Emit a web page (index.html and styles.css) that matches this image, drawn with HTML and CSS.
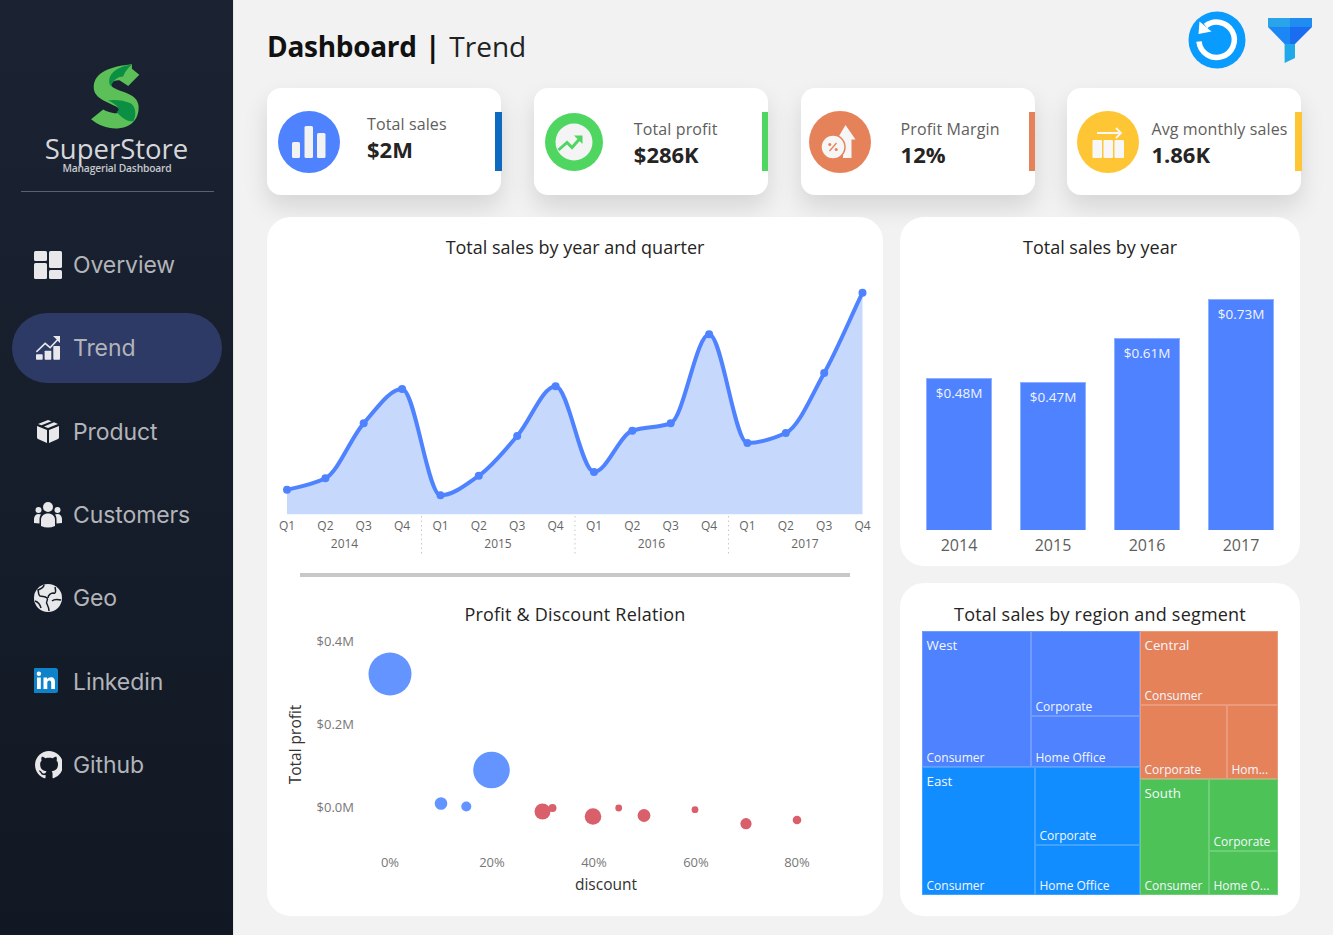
FILE: index.html
```html
<!DOCTYPE html>
<html lang="en">
<head>
<meta charset="utf-8">
<title>SuperStore Dashboard | Trend</title>
<link rel="stylesheet" href="styles.css">
</head>
<body>
<div class="app">
  <aside class="sidebar">
    <div class="brand">
      <svg class="logo" viewBox="270 68 155 200">
        <path fill="#5cbf57" d="M398 72C335 78 285 96 284 140C283 178 335 186 358 203C366 211 358 220 345 218C332 216 322 212 312 207L276 236C300 256 330 266 360 263C398 260 420 232 418 198C416 158 362 156 340 140C330 132 340 118 362 120L387 137L420 103L398 85Z"/>
        <path fill="#0a8f43" d="M398 73C365 76 332 92 330 120C330 130 332 134 336 137C342 118 356 108 372 108C376 96 386 82 398 73Z"/>
        <path fill="#0a8f43" d="M326 180C352 190 368 208 352 214C368 232 386 244 402 242C412 224 410 198 394 188C374 180 348 176 326 180Z"/>
      </svg>
      <div class="brand-name">SuperStore</div>
      <div class="brand-sub">Managerial Dashboard</div>
    </div>
    <nav class="nav">
      <a class="nav-item">
        <svg class="nav-icon" viewBox="0 0 28 28"><g fill="#e8e8ea"><rect x="0" y="0" width="13" height="10" rx="1.5"/><rect x="0" y="12" width="13" height="16" rx="1.5"/><rect x="15" y="0" width="13" height="17" rx="1.5"/><rect x="15" y="19" width="13" height="9" rx="1.5"/></g></svg>
        <span>Overview</span>
      </a>
      <a class="nav-item active">
        <svg class="nav-icon" viewBox="0 0 28 28"><g fill="#e8e8ea"><rect x="2" y="20.300" width="6.700" height="5.500" rx=".8"/><rect x="10.600" y="16.700" width="6.700" height="9.100" rx=".8"/><rect x="19.300" y="12" width="6.700" height="13.800" rx=".8"/><path d="M19 2h7v7l-2.300-2.300-7.500 8-5-4.300-8.300 8-1-1.100 9.200-9 5 4.300 6.600-7.200z"/></g></svg>
        <span>Trend</span>
      </a>
      <a class="nav-item">
        <svg class="nav-icon" viewBox="0 0 28 28"><g fill="#e8e8ea"><path d="M3 8l10 4v13L4 21a2 2 0 0 1-1-2z"/><path d="M25 8l-10 4v13l9-4a2 2 0 0 0 1-2z"/><path d="M14 2l3.500 1.300-10 4L4 6zM20 4.300L24 6l-10 4-4-1.600z"/></g></svg>
        <span>Product</span>
      </a>
      <a class="nav-item">
        <svg class="nav-icon" viewBox="0 0 28 28"><g fill="#e8e8ea"><circle cx="14" cy="6" r="5"/><circle cx="4.500" cy="9" r="3"/><circle cx="23.500" cy="9" r="3"/><path d="M7 25v-6c0-4 3-6.500 7-6.500s7 2.500 7 6.500v6q-7 3-14 0z"/><path d="M0 22v-4c0-3 2-5 4.500-5 1 0 1.700.2 2.500.6-1 1.400-1.500 3-1.500 5v3.900z"/><path d="M28 22v-4c0-3-2-5-4.500-5-1 0-1.700.2-2.500.6 1 1.400 1.500 3 1.500 5v3.900z"/></g></svg>
        <span>Customers</span>
      </a>
      <a class="nav-item">
        <svg class="nav-icon" viewBox="0 0 28 28"><circle cx="14" cy="14" r="14" fill="#e8e8ea"/><path fill="none" stroke="#151c29" stroke-width="1.500" d="M10 .8C10 4 6 5 4 6c1 3 0 5 2 6 3 1 5 0 7 2 2 2-2 4 0 6 1 2 2 4 2 7M14 14c0-3 3-5 5-5 3 1 3-2 2-6M18 17c2-2 5-2 9-1M1 17c3 1 5 3 6 7"/></svg>
        <span>Geo</span>
      </a>
      <a class="nav-item">
        <svg class="nav-icon" viewBox="0 0 28 28"><rect x="-1" y="0" width="25" height="25" rx="2.500" fill="#0f83c9"/><g fill="#fff"><rect x="3" y="9.500" width="3.800" height="11.500"/><circle cx="4.900" cy="5.800" r="2.200"/><path d="M9.500 9.500h3.600v1.700c.8-1.300 2.200-2 3.800-2 3.100 0 4.100 2 4.100 5V21h-3.800v-6c0-1.600-.4-2.600-1.800-2.600-1.600 0-2.100 1.100-2.100 2.700V21H9.500z"/></g></svg>
        <span>Linkedin</span>
      </a>
      <a class="nav-item">
        <svg class="nav-icon" viewBox="-.6 0 16 16"><path fill="#e8e8ea" d="M8 0C3.580 0 0 3.580 0 8c0 3.540 2.290 6.530 5.470 7.590.4.070.55-.17.55-.38 0-.19-.01-.82-.01-1.490-2.010.37-2.530-.49-2.690-.94-.09-.23-.48-.94-.82-1.130-.28-.15-.68-.52-.01-.53.63-.01 1.080.58 1.230.82.72 1.210 1.870.87 2.330.66.070-.52.28-.87.51-1.070-1.780-.2-3.640-.89-3.640-3.950 0-.87.31-1.590.82-2.150-.08-.2-.36-1.020.08-2.120 0 0 .67-.21 2.200.82.64-.18 1.320-.27 2-.27.68 0 1.360.09 2 .27 1.530-1.040 2.200-.82 2.200-.82.44 1.100.16 1.920.08 2.120.51.56.82 1.270.82 2.150 0 3.070-1.870 3.750-3.650 3.950.29.25.54.73.54 1.480 0 1.070-.01 1.930-.01 2.200 0 .21.15.46.55.38A8.013 8.013 0 0 0 16 8c0-4.420-3.580-8-8-8z"/></svg>
        <span>Github</span>
      </a>
    </nav>
  </aside>

  <main class="main">
    <header class="topbar">
      <h1 class="page-title"><b>Dashboard</b> <b class="sep">|</b> <span>Trend</span></h1>
      <div class="top-actions">
        <svg class="refresh" viewBox="0 0 58 58"><circle cx="29" cy="29" r="28.500" fill="#0a9bff"/><path fill="none" stroke="#fff" stroke-width="5.500" d="M17.500 15A17.700 17.700 0 1 1 11 30.500"/><path fill="#fff" d="M11.500 10.500L10.500 23L23.500 20.500z"/></svg>
        <svg class="funnel" viewBox="0 0 44 46"><path fill="#29a3e9" d="M0 0H22V9H0z"/><path fill="#1f8cf2" d="M22 0H44V9H22z"/><path fill="#1a87f5" d="M0 9H22V26H16.600z"/><path fill="#1a6cf0" d="M22 9H44L27 26H22z"/><path fill="#1fa9e8" d="M16.600 26H27V40L16.600 45z"/></svg>
      </div>
    </header>

    <section class="kpis">
      <article class="kpi">
        <svg class="kpi-icon" viewBox="0 0 62 62"><circle cx="31" cy="31" r="31" fill="#4e82ff"/><g fill="#f2f2f2"><rect x="14" y="31" width="8" height="16" rx="1.500"/><rect x="26.500" y="15" width="8.500" height="32" rx="1.500"/><rect x="39" y="22" width="8.500" height="25" rx="1.500"/></g></svg>
        <div class="kpi-text shift-up"><div class="kpi-label">Total sales</div><div class="kpi-value">$2M</div></div>
        <i class="kpi-bar bar-blue"></i>
      </article>
      <article class="kpi kpi-green">
        <svg class="kpi-icon small" viewBox="0 0 58 58"><circle cx="29" cy="29" r="29" fill="#4fd660"/><circle cx="29" cy="29" r="18.500" fill="#f4f4f4"/><path fill="none" stroke="#4fd660" stroke-width="3" d="M13.500 37L22 29.500L27 34.500L35 25.500"/><path fill="#4fd660" d="M29 22.500h8.500V31z"/></svg>
        <div class="kpi-text"><div class="kpi-label">Total profit</div><div class="kpi-value">$286K</div></div>
        <i class="kpi-bar bar-green"></i>
      </article>
      <article class="kpi kpi-orange">
        <svg class="kpi-icon" viewBox="0 0 62 62"><circle cx="31" cy="31" r="31" fill="#e6825a"/><path fill="#f6f6f6" d="M36.500 14L46.500 28.500H42.500V47H34V28.500H28z"/><circle cx="24" cy="36" r="12" fill="#f6f6f6" stroke="#e6825a" stroke-width="1.500"/><path fill="none" stroke="#e6825a" stroke-width="1.300" d="M20.500 40l7-8"/><circle cx="20.800" cy="33.500" r="1.500" fill="#e6825a"/><circle cx="27.200" cy="38.500" r="1.500" fill="#e6825a"/></svg>
        <div class="kpi-text"><div class="kpi-label">Profit Margin</div><div class="kpi-value">12%</div></div>
        <i class="kpi-bar bar-orange"></i>
      </article>
      <article class="kpi kpi-last">
        <svg class="kpi-icon" viewBox="0 0 62 62"><circle cx="31" cy="31" r="31" fill="#fec634"/><g fill="#f7f7f7"><rect x="15.500" y="29" width="9.500" height="18" rx="1"/><rect x="26.500" y="29" width="9.500" height="18" rx="1"/><rect x="37.500" y="29" width="9.500" height="18" rx="1"/></g><path fill="none" stroke="#f7f7f7" stroke-width="1.800" d="M20 22h24M39 17l5 5-5 5"/></svg>
        <div class="kpi-text"><div class="kpi-label">Avg monthly sales</div><div class="kpi-value">1.86K</div></div>
        <i class="kpi-bar bar-yellow"></i>
      </article>
    </section>

    <section class="charts">
      <div class="panel panel-left">
        <h2 class="panel-title">Total sales by year and quarter</h2>
        <svg class="line-chart" viewBox="267 270 616 303">
          <path fill="#c6d9fd" d="M287 489.700C299.800 487 312.600 484.600 325.400 478.300C338.200 472 350.900 437.400 363.700 423.300C376.500 409.200 389.300 389 402.100 389C414.900 389 427.700 495.300 440.500 495.300C453.300 495.300 466 484.400 478.800 475.700C491.600 467 504.400 450.700 517.200 436C530 421.300 542.800 386.300 555.600 386.300C568.400 386.300 581.200 472 594 472C606.800 472 619.500 434.900 632.300 430.700C645.100 426.500 657.900 427.900 670.700 423.300C683.500 418.700 696.300 334.300 709.100 334.300C721.900 334.300 734.600 443 747.400 443C760.200 443 773 438.700 785.800 433C798.600 427.300 811.400 395.900 824.200 373C837 350.100 849.700 319.400 862.500 292.700L862.500 514.300L287 514.300Z"/>
          <path fill="none" stroke="#4e82ff" stroke-width="4" d="M287 489.700C299.800 487 312.600 484.600 325.400 478.300C338.200 472 350.900 437.400 363.700 423.300C376.500 409.200 389.300 389 402.100 389C414.900 389 427.700 495.300 440.500 495.300C453.300 495.300 466 484.400 478.800 475.700C491.600 467 504.400 450.700 517.200 436C530 421.300 542.800 386.300 555.600 386.300C568.400 386.300 581.200 472 594 472C606.800 472 619.500 434.900 632.300 430.700C645.100 426.500 657.900 427.900 670.700 423.300C683.500 418.700 696.300 334.300 709.100 334.300C721.900 334.300 734.600 443 747.400 443C760.200 443 773 438.700 785.800 433C798.600 427.300 811.400 395.900 824.200 373C837 350.100 849.700 319.400 862.500 292.700"/>
          <g fill="#4e82ff">
            <circle cx="287" cy="489.700" r="4"/><circle cx="325.400" cy="478.300" r="4"/><circle cx="363.700" cy="423.300" r="4"/><circle cx="402.100" cy="389" r="4"/><circle cx="440.500" cy="495.300" r="4"/><circle cx="478.800" cy="475.700" r="4"/><circle cx="517.200" cy="436" r="4"/><circle cx="555.600" cy="386.300" r="4"/><circle cx="594" cy="472" r="4"/><circle cx="632.300" cy="430.700" r="4"/><circle cx="670.700" cy="423.300" r="4"/><circle cx="709.100" cy="334.300" r="4"/><circle cx="747.400" cy="443" r="4"/><circle cx="785.800" cy="433" r="4"/><circle cx="824.200" cy="373" r="4"/><circle cx="862.500" cy="292.700" r="4"/>
          </g>
          <g class="axis-sep"><path d="M421.500 516V555M575 516V555M728.500 516V555"/></g>
          <g class="axis-text" text-anchor="middle">
            <text x="287" y="530">Q1</text><text x="325.400" y="530">Q2</text><text x="363.700" y="530">Q3</text><text x="402.100" y="530">Q4</text><text x="440.500" y="530">Q1</text><text x="478.800" y="530">Q2</text><text x="517.200" y="530">Q3</text><text x="555.600" y="530">Q4</text><text x="594" y="530">Q1</text><text x="632.300" y="530">Q2</text><text x="670.700" y="530">Q3</text><text x="709.100" y="530">Q4</text><text x="747.400" y="530">Q1</text><text x="785.800" y="530">Q2</text><text x="824.200" y="530">Q3</text><text x="862.500" y="530">Q4</text>
            <text x="344.500" y="548">2014</text><text x="498" y="548">2015</text><text x="651.500" y="548">2016</text><text x="805" y="548">2017</text>
          </g>
        </svg>
        <div class="divider"></div>
        <h2 class="panel-title title-wide">Profit &amp; Discount Relation</h2>
        <svg class="scatter-chart" viewBox="267 626 616 290">
          <g class="axis-text scatter-axis">
            <g text-anchor="end"><text x="354" y="646">$0.4M</text><text x="354" y="729">$0.2M</text><text x="354" y="812">$0.0M</text></g>
            <g text-anchor="middle"><text x="390" y="867">0%</text><text x="492" y="867">20%</text><text x="594" y="867">40%</text><text x="696" y="867">60%</text><text x="797" y="867">80%</text></g>
          </g>
          <text class="axis-title" x="606" y="890" text-anchor="middle">discount</text>
          <text class="axis-title" text-anchor="middle" transform="translate(301 744.500) rotate(-90)">Total profit</text>
          <g fill="#6394ff"><circle cx="390" cy="674" r="21.500"/><circle cx="491.500" cy="770" r="18.300"/><circle cx="441" cy="803.500" r="6.300"/><circle cx="466.300" cy="806.500" r="5"/></g>
          <g fill="#d9606b"><circle cx="542.500" cy="811.500" r="8"/><circle cx="552.500" cy="808" r="4"/><circle cx="593" cy="816.500" r="8.300"/><circle cx="618.700" cy="808" r="3.400"/><circle cx="644" cy="815.500" r="6.400"/><circle cx="695" cy="809.700" r="3.400"/><circle cx="746" cy="823.700" r="5.600"/><circle cx="797" cy="820" r="4.300"/></g>
        </svg>
      </div>

      <div class="panel-column">
        <div class="panel panel-bars">
          <h2 class="panel-title">Total sales by year</h2>
          <div class="bars">
            <div class="bar-col"><div class="bar" style="height:152px">$0.48M</div><div class="bar-year">2014</div></div>
            <div class="bar-col"><div class="bar" style="height:148px">$0.47M</div><div class="bar-year">2015</div></div>
            <div class="bar-col"><div class="bar" style="height:192px">$0.61M</div><div class="bar-year">2016</div></div>
            <div class="bar-col"><div class="bar" style="height:231px">$0.73M</div><div class="bar-year">2017</div></div>
          </div>
        </div>
        <div class="panel panel-tree">
          <h2 class="panel-title title-wide">Total sales by region and segment</h2>
          <div class="treemap">
            <div class="tm-col tm-left">
              <div class="tm-region west">
                <div class="tm-cell w-consumer"><span class="tm-name">West</span><span>Consumer</span></div>
                <div class="tm-stack w-side">
                  <div class="tm-cell w-corp"><span>Corporate</span></div>
                  <div class="tm-cell w-home"><span>Home Office</span></div>
                </div>
              </div>
              <div class="tm-region east">
                <div class="tm-cell e-consumer"><span class="tm-name">East</span><span>Consumer</span></div>
                <div class="tm-stack e-side">
                  <div class="tm-cell e-corp"><span>Corporate</span></div>
                  <div class="tm-cell e-home"><span>Home Office</span></div>
                </div>
              </div>
            </div>
            <div class="tm-col tm-right">
              <div class="tm-stack central">
                <div class="tm-cell c-consumer"><span class="tm-name">Central</span><span>Consumer</span></div>
                <div class="tm-region c-row">
                  <div class="tm-cell c-corp"><span>Corporate</span></div>
                  <div class="tm-cell c-home"><span>Hom...</span></div>
                </div>
              </div>
              <div class="tm-region south">
                <div class="tm-cell s-consumer"><span class="tm-name">South</span><span>Consumer</span></div>
                <div class="tm-stack s-side">
                  <div class="tm-cell s-corp"><span>Corporate</span></div>
                  <div class="tm-cell s-home"><span>Home O...</span></div>
                </div>
              </div>
            </div>
          </div>
        </div>
      </div>
    </section>
  </main>
</div>
</body>
</html>
```
FILE: styles.css
```css
* { box-sizing: border-box; }
html, body { margin: 0; height: 100%; }
body { font-family: "Open Sans", "Noto Sans", sans-serif; background: #f2f2f2; color: #252423; overflow: hidden; }
.app { display: flex; width: 1333px; height: 935px; }

.sidebar { width: 234px; flex: none; background: linear-gradient(180deg, #1b2333 0%, #111823 100%); border-right: 1px solid #e6e6e6; display: flex; flex-direction: column; }
.brand { display: flex; flex-direction: column; align-items: center; padding-top: 63px; height: 192px; margin: 0 19px 0 21px; border-bottom: 1px solid #5a606c; }
.logo { width: 52px; height: 67px; display: block; margin-left: -5px; flex: none; }
.brand-name { font-size: 27.500px; line-height: 28px; color: #d6d7da; margin: 5px 0 0 -2px; }
.brand-sub { font-size: 10.300px; line-height: 10px; font-weight: 600; color: #c6c8cc; margin: 0 0 0 -1px; letter-spacing: -.2px; }

.nav { display: flex; flex-direction: column; gap: 13.330px; padding: 38px 12px 0; }
.nav-item { height: 70px; display: flex; align-items: center; gap: 11px; padding-left: 22px; width: 210px; border-radius: 35px; font-family: Inter, sans-serif; font-size: 23px; letter-spacing: -.1px; color: #b2b4b9; }
.nav-item.active { background: #2e3a66; }
.nav-icon { width: 28px; height: 28px; flex: none; }

.main { flex: 1; min-width: 0; padding: 0 33px 19px 33px; display: flex; flex-direction: column; }
.topbar { height: 88px; flex: none; display: flex; justify-content: space-between; }
.page-title { margin: 29px 0 0; font-size: 28px; line-height: 34px; font-weight: 400; color: #111; white-space: nowrap; }
.page-title b { font-weight: 700; letter-spacing: -.3px; }
.page-title .sep { margin: 0 2px 0 1px; }
.page-title span { color: #222; }
.top-actions { display: flex; align-items: flex-start; gap: 22px; margin-right: -12px; padding-top: 11px; }
.refresh { width: 58px; height: 58px; }
.funnel { width: 44px; height: 46px; margin-top: 7px; }

.kpis { display: flex; gap: 32.800px; flex: none; }
.kpi { width: 234px; flex: none; height: 107px; background: #fff; border-radius: 14px; box-shadow: 0 12px 24px rgba(0, 0, 0, .12); display: flex; align-items: center; padding-left: 11px; }
.kpi-icon { width: 62px; height: 62px; flex: none; }
.kpi-icon.small { width: 58px; height: 58px; }
.kpi-text { margin-top: 2px; margin-left: 27px; flex: 1; min-width: 0; }
.kpi-green .kpi-text { margin-left: 31px; }
.kpi-orange { padding-left: 8px; }
.kpi-orange .kpi-text { margin-left: 30px; }
.kpi-last { padding-left: 10px; }
.kpi-last .kpi-text { margin-left: 12px; }
.kpi-text.shift-up { margin-top: -8px; }
.kpi-label { font-size: 16px; line-height: 22px; color: #605e5c; white-space: nowrap; letter-spacing: .12px; }
.kpi-value { font-size: 22px; line-height: 28px; font-weight: 700; color: #252423; }
.kpi-bar { width: 6.500px; height: 59px; flex: none; margin-right: -.5px; }
.bar-blue { background: #0d6abf; }
.bar-green { background: #4fd660; }
.bar-orange { background: #e6825a; }
.bar-yellow { background: #fec634; }

.charts { display: flex; gap: 17px; margin-top: 22px; flex: 1; min-height: 0; }
.panel { background: #fff; border-radius: 24px; }
.panel-left { width: 616px; padding-top: 19px; display: flex; flex-direction: column; align-items: center; }
.panel-title { margin: 0; font-size: 18px; line-height: 22px; font-weight: 400; color: #252423; text-align: center; white-space: nowrap; }
.title-wide { letter-spacing: .2px; }
.line-chart { display: block; width: 616px; height: 303px; margin-top: 12px; flex: none; }
.divider { width: 550px; height: 4px; background: #c8c8c8; flex: none; margin-bottom: 26px; }
.scatter-chart { display: block; width: 616px; height: 290px; flex: none; margin-top: 1px; }
.axis-text { font-size: 12px; fill: #666; }
.scatter-axis { font-size: 13px; fill: #777; }
.axis-title { font-size: 15.500px; fill: #333; }
.axis-sep path { stroke: #c8c8c8; stroke-width: 1; stroke-dasharray: 1.500 3; fill: none; }

.panel-column { width: 400px; display: flex; flex-direction: column; gap: 17px; }
.panel-bars { height: 349px; padding: 19px 26px 0; display: flex; flex-direction: column; }
.bars { display: flex; gap: 28px; height: 302px; }
.bar-col { width: 66px; display: flex; flex-direction: column; justify-content: flex-end; align-items: stretch; }
.bar { background: #4e82ff; border: 1px solid #8fb0ff; border-bottom: 0; color: #f1f4ff; font-size: 13.500px; text-align: center; padding-top: 5px; line-height: 18px; }
.bar-year { height: 30px; line-height: 30px; flex: none; text-align: center; font-size: 16px; color: #605e5c; }
.panel-tree { flex: 1; padding: 20px 22px 0; }
.panel-tree .panel-title { margin-bottom: 6px; }

.treemap { display: flex; width: 356.500px; height: 264px; color: #f4f7ff; font-size: 12px; line-height: 16px; margin-left: -.5px; }
.tm-col { display: flex; flex-direction: column; }
.tm-left { width: 218px; }
.tm-right { width: 138.500px; }
.tm-region { display: flex; }
.tm-stack { display: flex; flex-direction: column; }
.tm-cell { display: flex; flex-direction: column; justify-content: flex-end; padding: 0 3px 0 4px; border: 1px solid rgba(255, 255, 255, .2); min-width: 0; white-space: nowrap; overflow: hidden; }
.tm-name { font-size: 13.300px; line-height: 18px; margin-bottom: auto; padding-top: 4px; }
.west { height: 136px; background: #4e82ff; }
.east { height: 128px; background: #118dff; }
.w-consumer { width: 109px; }
.w-side { width: 109px; }
.w-corp { height: 85px; }
.w-home { height: 51px; }
.e-consumer { width: 113px; }
.e-side { width: 105px; }
.e-corp { height: 78px; }
.e-home { height: 50px; }
.central { height: 148px; background: #e6825a; }
.c-consumer { height: 74px; }
.c-row { height: 74px; }
.c-corp { width: 87px; }
.c-home { width: 51.500px; }
.south { height: 116px; background: #4cc257; }
.s-consumer { width: 69px; }
.s-side { width: 69.500px; }
.s-corp { height: 72px; }
.s-home { height: 44px; }
```
